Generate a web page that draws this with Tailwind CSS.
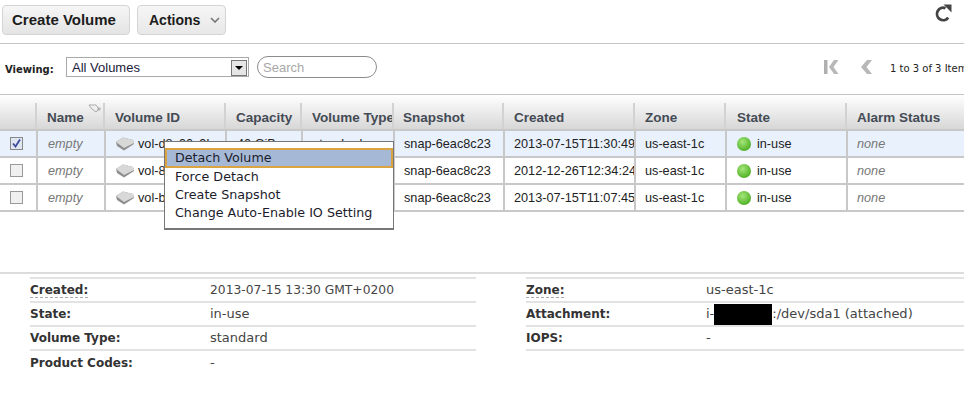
<!DOCTYPE html>
<html lang="en">
<head>
  <meta charset="UTF-8" />
  <title>Volumes</title>
  <script src="https://cdn.jsdelivr.net/npm/@tailwindcss/browser@4"></script>
</head>
<body class="relative w-[964px] h-[414px] overflow-hidden bg-white font-['Liberation_Sans',Arial,sans-serif] text-[#222]">

  <!-- Toolbar -->
  <div class="h-[44px] border-b border-[#c4c4c4] flex items-start pt-[5px] pl-[2px]">
    <button class="w-[128px] h-[30px] rounded-[4px] border border-[#d4d4d4] bg-gradient-to-b from-[#f6f6f6] to-[#e4e4e4] pr-[4px] text-[15px] font-bold text-[#1c1c1c]">Create Volume</button>
    <button class="ml-[7px] w-[89px] h-[30px] rounded-[4px] border border-[#d4d4d4] bg-gradient-to-b from-[#f6f6f6] to-[#e8e8e8] text-[14px] font-bold text-[#1c1c1c] flex items-center pl-[11px]">
      Actions
      <svg class="ml-[10px]" width="10" height="6" viewBox="0 0 10 6"><path d="M1 1 L5 5 L9 1" fill="none" stroke="#777" stroke-width="1.6"/></svg>
    </button>
    <svg class="ml-auto mr-[11px] mt-[-1px]" width="18" height="18" viewBox="0 0 18 18">
      <path d="M13.2 13.6 A6.2 6.2 0 1 1 10.5 4.2" fill="none" stroke="#444" stroke-width="2.8"/>
      <path d="M9.5 0.5 L17.5 0.5 L17.5 8.5 Z" fill="#444" transform="translate(-1 0)"/>
    </svg>
  </div>

  <!-- Filter bar -->
  <div class="h-[51px] border-b border-[#c4c4c4] flex items-start overflow-hidden">
    <span class="shrink-0 mt-[18px] ml-[5px] w-[61px] font-['DejaVu_Sans',Verdana,sans-serif] text-[10px] font-bold text-[#222]">Viewing:</span>
    <div class="shrink-0 mt-[13px] w-[183px] h-[20px] border border-[#a9a9a9] flex items-center pl-[5px] pt-[1px] text-[13px] text-[#1a1a3a]">
      All Volumes
      <span class="ml-auto mr-[1px] w-[16px] h-[16px] border border-[#777] bg-[#e6e6e6] flex items-center justify-center">
        <span class="w-0 h-0 border-x-[4px] border-x-transparent border-t-[4px] border-t-black"></span>
      </span>
    </div>
    <div class="shrink-0 mt-[12px] ml-[8px] w-[120px] h-[22px] rounded-full border border-[#8c8c8c] pl-[5px] text-[13px] leading-[21px] text-[#a8a8a8]">Search</div>
    <svg class="shrink-0 ml-[447px] mt-[16px]" width="15" height="14" viewBox="0 0 15 14">
      <rect x="0" y="0" width="3.5" height="14" fill="#b0b0b0"/>
      <path d="M10 0 L14.5 0 L9.5 7 L14.5 14 L10 14 L5 7 Z" fill="#b8b8b8"/>
    </svg>
    <svg class="shrink-0 ml-[21px] mt-[16px]" width="13" height="14" viewBox="0 0 13 14">
      <path d="M7 0 L12 0 L6.5 7 L12 14 L7 14 L1 7 Z" fill="#b8b8b8"/>
    </svg>
    <span class="shrink-0 ml-[17px] mt-[17px] whitespace-nowrap font-['DejaVu_Sans',Verdana,sans-serif] text-[10px] text-[#222]">1 to 3 of 3 Items</span>
  </div>

  <!-- Volumes table -->
  <table class="table-fixed border-collapse w-[964px] text-[12.7px] [&_td:not(:first-child)]:pt-[2px]">
    <colgroup>
      <col class="w-[37px]" /><col class="w-[68px]" /><col class="w-[121px]" /><col class="w-[76px]" /><col class="w-[92px]" />
      <col class="w-[110px]" /><col class="w-[131px]" /><col class="w-[91px]" /><col class="w-[121px]" /><col />
    </colgroup>
    <thead>
      <tr class="h-[35px] bg-gradient-to-b from-white to-[#d6d6d6] text-left text-[13.5px] font-bold text-[#444b55]">
        <th class="border-b-2 border-[#c8c8c8] p-0 align-bottom"><div class="h-[26px] border-r-2 border-[#d2d2d2]"></div></th>
        <th class="border-b-2 border-[#c8c8c8] p-0 align-bottom"><div class="relative h-[26px] border-r-2 border-[#d2d2d2] pl-[10px] pt-[5px] overflow-hidden whitespace-nowrap">Name
          <svg class="absolute top-[1px] left-[51px]" width="14" height="10" viewBox="0 0 14 10"><path d="M1 1 L8 1 L11 5 L8 8 L4 5 Z" fill="none" stroke="#aaa"/><path d="M9 5 H13 M11 3 V7" stroke="#aaa"/></svg>
        </div></th>
        <th class="border-b-2 border-[#c8c8c8] p-0 align-bottom"><div class="h-[26px] border-r-2 border-[#d2d2d2] pl-[10px] pt-[5px] overflow-hidden whitespace-nowrap">Volume ID</div></th>
        <th class="border-b-2 border-[#c8c8c8] p-0 align-bottom"><div class="h-[26px] border-r-2 border-[#d2d2d2] pl-[10px] pt-[5px] overflow-hidden whitespace-nowrap">Capacity</div></th>
        <th class="border-b-2 border-[#c8c8c8] p-0 align-bottom"><div class="h-[26px] border-r-2 border-[#d2d2d2] pl-[10px] pt-[5px] overflow-hidden whitespace-nowrap">Volume Type</div></th>
        <th class="border-b-2 border-[#c8c8c8] p-0 align-bottom"><div class="h-[26px] border-r-2 border-[#d2d2d2] pl-[9px] pt-[5px] overflow-hidden whitespace-nowrap">Snapshot</div></th>
        <th class="border-b-2 border-[#c8c8c8] p-0 align-bottom"><div class="h-[26px] border-r-2 border-[#d2d2d2] pl-[10px] pt-[5px] overflow-hidden whitespace-nowrap">Created</div></th>
        <th class="border-b-2 border-[#c8c8c8] p-0 align-bottom"><div class="h-[26px] border-r-2 border-[#d2d2d2] pl-[10px] pt-[5px] overflow-hidden whitespace-nowrap">Zone</div></th>
        <th class="border-b-2 border-[#c8c8c8] p-0 align-bottom"><div class="h-[26px] border-r-2 border-[#d2d2d2] pl-[11px] pt-[5px] overflow-hidden whitespace-nowrap">State</div></th>
        <th class="border-b-2 border-[#c8c8c8] p-0 align-bottom"><div class="h-[26px] pl-[10px] pt-[5px] overflow-hidden whitespace-nowrap">Alarm Status</div></th>
      </tr>
    </thead>
    <tbody>
      <tr class="h-[27px] bg-[#e9f1fc]">
        <td class="border-b-2 border-r-2 border-[#c8c8c8] p-0"><span class="ml-[10px] w-[13px] h-[13px] border border-[#888] bg-[#dfe6f2] flex items-center justify-center"><svg width="11" height="11" viewBox="0 0 11 11"><path d="M2 5.5 L4.5 8.5 L9 1.5" fill="none" stroke="#3c4a9a" stroke-width="1.8"/></svg></span></td>
        <td class="border-b-2 border-r-2 border-[#c8c8c8] p-0 pl-[10px] italic text-[#777]">empty</td>
        <td class="border-b-2 border-r-2 border-[#c8c8c8] p-0 pl-[10px] whitespace-nowrap overflow-hidden"><span class="flex items-center gap-[4px]"><svg width="18" height="14" viewBox="0 0 18 14"><path d="M0 5 L7 .5 L17 3 L18 7 L8 13.5 L1 9 Z" fill="#8e8e8e"/><path d="M0 5 L7 .5 L17 3 L18 6 L8 11 Z" fill="#d8d8d8"/></svg>vol-d8c90c9b</span></td>
        <td class="border-b-2 border-r-2 border-[#c8c8c8] p-0 pl-[10px] whitespace-nowrap">40 GiB</td>
        <td class="border-b-2 border-r-2 border-[#c8c8c8] p-0 pl-[10px] whitespace-nowrap">standard</td>
        <td class="border-b-2 border-r-2 border-[#c8c8c8] p-0 pl-[9px] whitespace-nowrap">snap-6eac8c23</td>
        <td class="border-b-2 border-r-2 border-[#c8c8c8] p-0 pl-[9px] whitespace-nowrap overflow-hidden">2013-07-15T11:30:49</td>
        <td class="border-b-2 border-r-2 border-[#c8c8c8] p-0 pl-[9px] whitespace-nowrap">us-east-1c</td>
        <td class="border-b-2 border-r-2 border-[#c8c8c8] p-0 pl-[10px] whitespace-nowrap"><span class="flex items-center gap-[6px]"><span class="w-[14px] h-[14px] rounded-full bg-[radial-gradient(circle_at_40%_35%,#a5e67a,#4fb024_75%)]"></span>in-use</span></td>
        <td class="border-b-2 border-[#c8c8c8] p-0 pl-[9px] italic text-[#777]">none</td>
      </tr>
      <tr class="h-[27px] bg-white">
        <td class="border-b-2 border-r-2 border-[#c8c8c8] p-0"><span class="block ml-[10px] w-[13px] h-[13px] border border-[#999] bg-[#f0f0f0]"></span></td>
        <td class="border-b-2 border-r-2 border-[#c8c8c8] p-0 pl-[10px] italic text-[#777]">empty</td>
        <td class="border-b-2 border-r-2 border-[#c8c8c8] p-0 pl-[10px] whitespace-nowrap overflow-hidden"><span class="flex items-center gap-[4px]"><svg width="18" height="14" viewBox="0 0 18 14"><path d="M0 5 L7 .5 L17 3 L18 7 L8 13.5 L1 9 Z" fill="#8e8e8e"/><path d="M0 5 L7 .5 L17 3 L18 6 L8 11 Z" fill="#d8d8d8"/></svg>vol-8a21f3c6</span></td>
        <td class="border-b-2 border-r-2 border-[#c8c8c8] p-0 pl-[10px] whitespace-nowrap">40 GiB</td>
        <td class="border-b-2 border-r-2 border-[#c8c8c8] p-0 pl-[10px] whitespace-nowrap">standard</td>
        <td class="border-b-2 border-r-2 border-[#c8c8c8] p-0 pl-[9px] whitespace-nowrap">snap-6eac8c23</td>
        <td class="border-b-2 border-r-2 border-[#c8c8c8] p-0 pl-[9px] whitespace-nowrap overflow-hidden">2012-12-26T12:34:24</td>
        <td class="border-b-2 border-r-2 border-[#c8c8c8] p-0 pl-[9px] whitespace-nowrap">us-east-1c</td>
        <td class="border-b-2 border-r-2 border-[#c8c8c8] p-0 pl-[10px] whitespace-nowrap"><span class="flex items-center gap-[6px]"><span class="w-[14px] h-[14px] rounded-full bg-[radial-gradient(circle_at_40%_35%,#a5e67a,#4fb024_75%)]"></span>in-use</span></td>
        <td class="border-b-2 border-[#c8c8c8] p-0 pl-[9px] italic text-[#777]">none</td>
      </tr>
      <tr class="h-[27px] bg-white">
        <td class="border-b-2 border-r-2 border-[#c8c8c8] p-0"><span class="block ml-[10px] w-[13px] h-[13px] border border-[#999] bg-[#f0f0f0]"></span></td>
        <td class="border-b-2 border-r-2 border-[#c8c8c8] p-0 pl-[10px] italic text-[#777]">empty</td>
        <td class="border-b-2 border-r-2 border-[#c8c8c8] p-0 pl-[10px] whitespace-nowrap overflow-hidden"><span class="flex items-center gap-[4px]"><svg width="18" height="14" viewBox="0 0 18 14"><path d="M0 5 L7 .5 L17 3 L18 7 L8 13.5 L1 9 Z" fill="#8e8e8e"/><path d="M0 5 L7 .5 L17 3 L18 6 L8 11 Z" fill="#d8d8d8"/></svg>vol-b7e4a1d2</span></td>
        <td class="border-b-2 border-r-2 border-[#c8c8c8] p-0 pl-[10px] whitespace-nowrap">40 GiB</td>
        <td class="border-b-2 border-r-2 border-[#c8c8c8] p-0 pl-[10px] whitespace-nowrap">standard</td>
        <td class="border-b-2 border-r-2 border-[#c8c8c8] p-0 pl-[9px] whitespace-nowrap">snap-6eac8c23</td>
        <td class="border-b-2 border-r-2 border-[#c8c8c8] p-0 pl-[9px] whitespace-nowrap overflow-hidden">2013-07-15T11:07:45</td>
        <td class="border-b-2 border-r-2 border-[#c8c8c8] p-0 pl-[9px] whitespace-nowrap">us-east-1c</td>
        <td class="border-b-2 border-r-2 border-[#c8c8c8] p-0 pl-[10px] whitespace-nowrap"><span class="flex items-center gap-[6px]"><span class="w-[14px] h-[14px] rounded-full bg-[radial-gradient(circle_at_40%_35%,#a5e67a,#4fb024_75%)]"></span>in-use</span></td>
        <td class="border-b-2 border-[#c8c8c8] p-0 pl-[9px] italic text-[#777]">none</td>
      </tr>
    </tbody>
  </table>

  <!-- Details pane -->
  <div class="mt-[60px] border-t-2 border-[#dcdcdc] pt-[3px] pl-[30px] flex gap-[50px] font-['DejaVu_Sans',Verdana,sans-serif] text-[13px] text-[#444]">
    <div class="w-[446px] border-t-2 border-[#e2e2e2]">
      <div class="h-[24px] border-b-2 border-[#e2e2e2] flex items-center"><span class="w-[180px] text-[12px] font-bold text-[#333]"><span class="border-b border-dashed border-[#aaa]">Created:</span></span><span class="text-[12.3px]">2013-07-15 13:30 GMT+0200</span></div>
      <div class="h-[24px] border-b-2 border-[#e2e2e2] flex items-center"><span class="w-[180px] text-[12px] font-bold text-[#333]">State:</span>in-use</div>
      <div class="h-[24px] border-b-2 border-[#e2e2e2] flex items-center"><span class="w-[180px] text-[12px] font-bold text-[#333]">Volume Type:</span>standard</div>
      <div class="h-[24px] flex items-center"><span class="w-[180px] text-[12px] font-bold text-[#333]">Product Codes:</span>-</div>
    </div>
    <div class="w-[438px] border-t-2 border-[#e2e2e2]">
      <div class="h-[24px] border-b-2 border-[#e2e2e2] flex items-center"><span class="w-[180px] text-[12px] font-bold text-[#333]"><span class="border-b border-dashed border-[#aaa]">Zone:</span></span>us-east-1c</div>
      <div class="h-[24px] border-b-2 border-[#e2e2e2] flex items-center"><span class="w-[180px] text-[12px] font-bold text-[#333]">Attachment:</span>i-<span class="w-[58px] h-[21px] bg-black"></span>:/dev/sda1 (attached)</div>
      <div class="h-[24px] border-b-2 border-[#e2e2e2] flex items-center"><span class="w-[180px] text-[12px] font-bold text-[#333]">IOPS:</span>-</div>
    </div>
  </div>

  <!-- Context menu -->
  <div class="absolute left-[164px] top-[141px] w-[230px] h-[89px] border border-[#777] border-b-2 bg-white pt-[6px] font-['DejaVu_Sans',Verdana,sans-serif] text-[12.7px] text-[#1c1c2c]">
    <div class="h-[20px] border-2 border-[#d9a441] bg-[#a5b9d6] pl-[8px] leading-[16px]">Detach Volume</div>
    <div class="h-[18px] pl-[10px] leading-[18px]">Force Detach</div>
    <div class="h-[18px] pl-[10px] leading-[18px]">Create Snapshot</div>
    <div class="h-[18px] pl-[10px] leading-[18px]">Change Auto-Enable IO Setting</div>
  </div>
</body>
</html>
